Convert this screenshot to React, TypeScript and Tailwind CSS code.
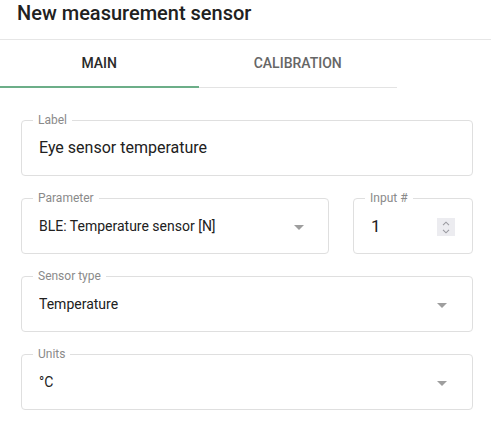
import React from "react";

function Arrow() {
  return (
    <svg width="10" height="5" viewBox="0 0 10 5" className="shrink-0">
      <path d="M0 0 L10 0 L5 5 Z" fill="#9e9e9e" />
    </svg>
  );
}

function Spinner() {
  return (
    <div className="w-[18px] h-[18px] bg-[#ececf0] flex flex-col items-center justify-center gap-[3px] shrink-0">
      <svg width="8" height="5" viewBox="0 0 8 5">
        <path d="M1 4.2 L4 1.2 L7 4.2" fill="none" stroke="#9a9aa0" strokeWidth="1.1" />
      </svg>
      <svg width="8" height="5" viewBox="0 0 8 5">
        <path d="M1 0.8 L4 3.8 L7 0.8" fill="none" stroke="#9a9aa0" strokeWidth="1.1" />
      </svg>
    </div>
  );
}

function Field({
  label,
  value,
  trailing,
  className = "",
  valueClass = "text-[16px]",
}: {
  label: string;
  value: string;
  trailing?: React.ReactNode;
  className?: string;
  valueClass?: string;
}) {
  return (
    <fieldset className={`border border-[#dfdfdf] rounded-[4px] min-w-0 ${className}`}>
      <legend className="ml-[11px] px-[5px] text-[12px] leading-[12px] text-[#8a8a8a]">{label}</legend>
      <div className="flex items-center pl-[17px] pt-[10px] pb-[15px]">
        <span className={`flex-1 leading-[24px] text-[#212121] truncate ${valueClass}`}>{value}</span>
        {trailing}
      </div>
    </fieldset>
  );
}

export default function App() {
  return (
    <div
      className="w-[491px] h-[436px] bg-white overflow-hidden"
      style={{ fontFamily: "Roboto, 'Liberation Sans', sans-serif" }}
    >
      <div className="h-[40px] border-b border-[#e6e6e6] pl-[17px]">
        <h1 className="text-[20px] leading-[26px] font-medium text-[#212121]">New measurement sensor</h1>
      </div>
      <div className="w-[397px] h-[48px] flex border-b border-[#e3e3e3]">
        <div className="relative flex-1 flex items-center justify-center text-[14px] font-medium text-[#2a2a2a]">
          MAIN
          <div className="absolute left-0 right-0 bottom-[-1px] h-[2px] bg-[#6cae88]" />
        </div>
        <div className="flex-1 flex items-center justify-center text-[14px] font-medium text-[#666666]">
          CALIBRATION
        </div>
      </div>
      <div className="pt-[26px] pl-[21px] pr-[18px] flex flex-col gap-[16px]">
        <Field label="Label" value="Eye sensor temperature" />
        <div className="flex gap-[24px]">
          <Field
            label="Parameter"
            value="BLE: Temperature sensor [N]"
            valueClass="text-[14px]"
            className="flex-1"
            trailing={<div className="mr-[24px] mt-[2px] flex"><Arrow /></div>}
          />
          <Field
            label="Input #"
            value="1"
            className="w-[120px] shrink-0"
            valueClass="text-[17px]"
            trailing={<div className="mr-[17px] mt-[2px] flex"><Spinner /></div>}
          />
        </div>
        <Field
          label="Sensor type"
          value="Temperature"
          valueClass="text-[14px]"
          trailing={<div className="mr-[25px] mt-[2px] flex"><Arrow /></div>}
        />
        <Field
          label="Units"
          value="°C"
          valueClass="text-[14px]"
          trailing={<div className="mr-[25px] mt-[2px] flex"><Arrow /></div>}
        />
      </div>
    </div>
  );
}
